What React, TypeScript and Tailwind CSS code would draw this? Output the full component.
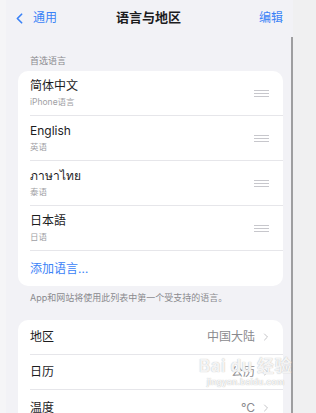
import { ChevronLeft, ChevronRight } from "lucide-react";

const languages = [
  { name: "简体中文", sub: "iPhone语言" },
  { name: "English", sub: "英语" },
  { name: "ภาษาไทย", sub: "泰语" },
  { name: "日本語", sub: "日语" },
];

const regionRows = [
  { label: "地区", value: "中国大陆" },
  { label: "日历", value: "公历" },
  { label: "温度", value: "°C" },
];

function DragHandle() {
  return (
    <div className="flex flex-col gap-[2px] w-[15px]">
      <div className="h-px bg-[#c7c7cc]" />
      <div className="h-px bg-[#c7c7cc]" />
      <div className="h-px bg-[#c7c7cc]" />
    </div>
  );
}

export default function App() {
  return (
    <div
      className="w-[316px] h-[413px] overflow-hidden flex bg-[#f2f2f6] text-[#1c1c1e] relative"
      style={{ fontFamily: "Inter, 'Noto Sans CJK SC', 'DejaVu Sans', sans-serif" }}
    >
      {/* left edge */}
      <div className="w-[6px] shrink-0 bg-[#f5f5f7]" />

      {/* main page */}
      <div className="w-[285px] shrink-0 flex flex-col">
        {/* Nav bar */}
        <header className="h-[36px] shrink-0 grid grid-cols-[1fr_auto_1fr] items-center pl-[5px] pr-[8px]">
          <button className="flex items-center text-[#3a82f7] text-[12px] justify-self-start">
            <ChevronLeft className="w-[17px] h-[17px]" strokeWidth={2.4} />
            <span className="ml-[5px]">通用</span>
          </button>
          <h1 className="text-[13px] font-semibold pl-[3px]">语言与地区</h1>
          <button className="text-[#3a82f7] text-[12px] justify-self-end">编辑</button>
        </header>

        <div className="shrink-0 pl-[12px] pr-[8px]">
          <div className="text-[9px] text-[#8a8a8e] pl-[12px] pt-[19px] pb-[4px] leading-[12px]">首选语言</div>

          {/* Preferred languages card */}
          <div className="bg-white rounded-[10px] overflow-hidden">
            {languages.map((l) => (
              <div key={l.name} className="pl-[12px]">
                <div className="h-[45px] flex items-center justify-between pr-[14px] border-b border-[#e6e6ea]">
                  <div className="flex flex-col">
                    <span className="text-[12px] leading-[16px]">{l.name}</span>
                    <span className="text-[8.5px] leading-[12px] mt-[2px] text-[#a0a0a4]">{l.sub}</span>
                  </div>
                  <DragHandle />
                </div>
              </div>
            ))}
            <div className="h-[35px] flex items-center pl-[12px] text-[12px] text-[#3a82f7]">添加语言…</div>
          </div>

          <div className="text-[9px] text-[#8a8a8e] pl-[12px] pt-[6px] leading-[12px]">
            App和网站将使用此列表中第一个受支持的语言。
          </div>

          {/* Region card */}
          <div className="bg-white rounded-[10px] overflow-hidden mt-[16px]">
            {regionRows.map((r, i) => (
              <div key={r.label} className="pl-[12px]">
                <div
                  className={
                    "h-[35px] flex items-center justify-between pr-[11px] " +
                    (i < regionRows.length - 1 ? "border-b border-[#e6e6ea]" : "")
                  }
                >
                  <span className="text-[12px]">{r.label}</span>
                  <div className="flex items-center gap-[5px] text-[12px] text-[#8a8a8e]">
                    <span>{r.value}</span>
                    <ChevronRight className="w-[12px] h-[12px] text-[#c4c4c7]" strokeWidth={2} />
                  </div>
                </div>
              </div>
            ))}
          </div>
        </div>
      </div>

      {/* scroll bar */}
      <div className="w-[2px] shrink-0 pt-[37px]">
        <div className="h-full bg-[#9e9ea0]" />
      </div>

      {/* right edge */}
      <div className="flex-1 bg-[#f0f0f1]" />

      {/* watermark */}
      <div className="absolute left-[199px] top-[355px] flex flex-col items-center text-white/85 pointer-events-none">
        <span className="text-[17px] leading-[22px] font-bold tracking-wide" style={{ textShadow: "0 0 1px #aaa" }}>
          Bai du 经验
        </span>
        <span className="text-[8.5px] leading-[11px] font-bold" style={{ textShadow: "0 0 1px #aaa" }}>
          jingyan.baidu.com
        </span>
      </div>
    </div>
  );
}
